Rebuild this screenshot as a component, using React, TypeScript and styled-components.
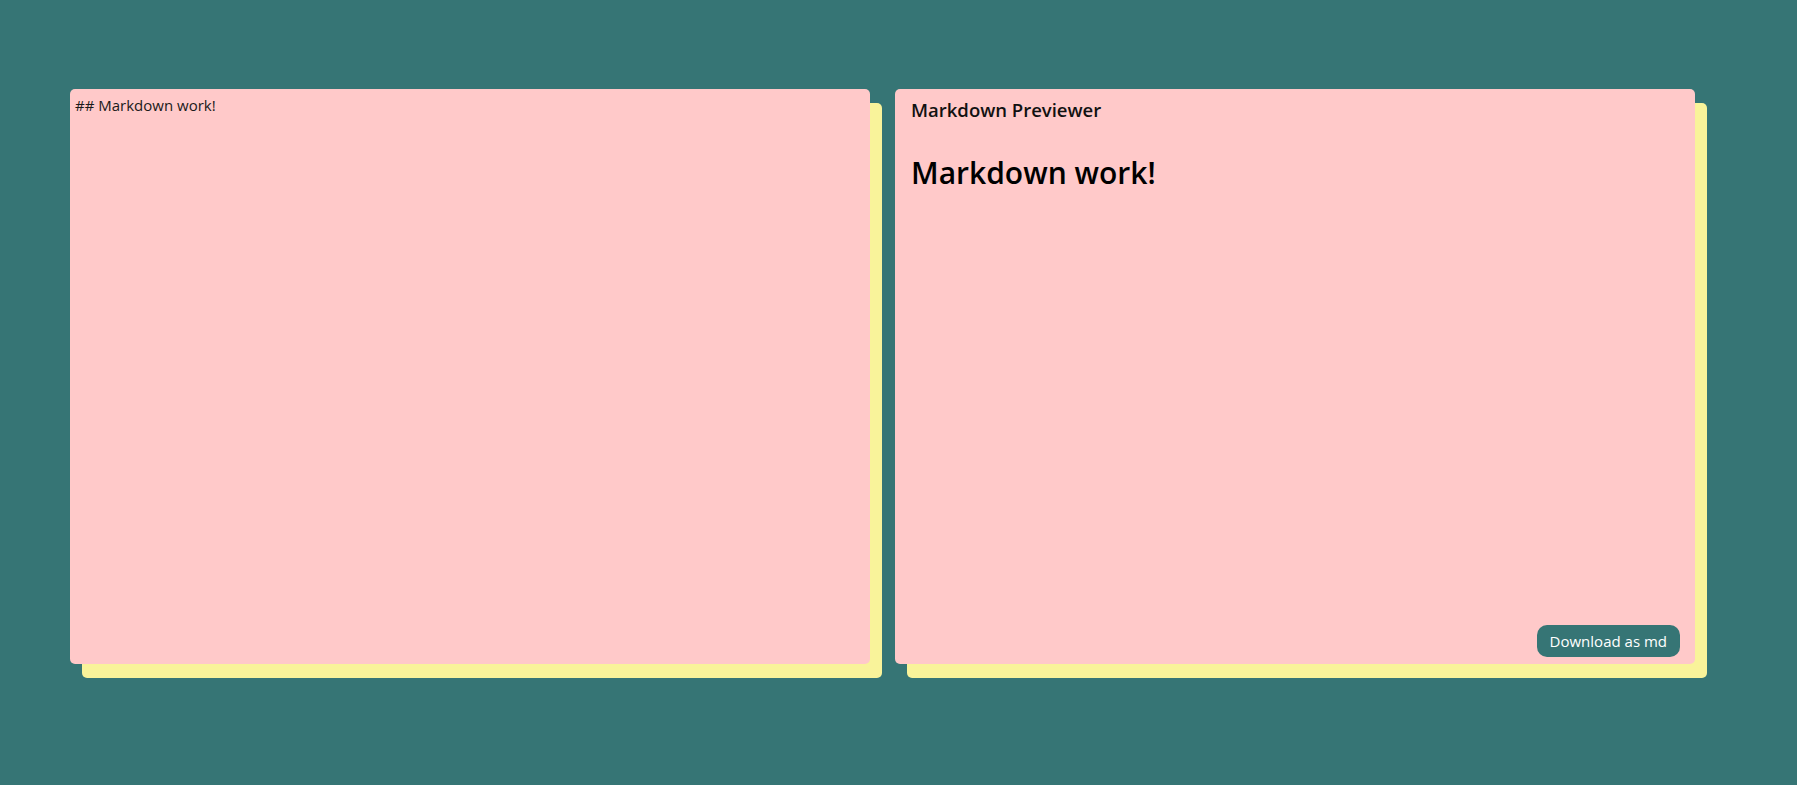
import React, { useState } from "react";
import styled, { createGlobalStyle } from "styled-components";

const GlobalStyle = createGlobalStyle`
  * {
    box-sizing: border-box;
  }
  html, body {
    margin: 0;
    padding: 0;
    background-color: #367575;
    font-family: "Open Sans", "Noto Sans", sans-serif;
  }
`;

const Page = styled.main`
  display: flex;
  gap: 25px;
  padding: 89px 0 0 70px;
  min-height: 785px;
`;

const Panel = styled.div`
  width: 800px;
  height: 575px;
  background-color: #ffc9c9;
  border-radius: 5px;
  box-shadow: 12px 14px 0 0 #f9f39a;
`;

const Editor = styled.textarea`
  display: block;
  width: 100%;
  height: 100%;
  padding: 6px 5px;
  border: none;
  border-radius: 5px;
  background: transparent;
  resize: none;
  outline: none;
  color: #1a1a1a;
  font-family: "Open Sans", "Noto Sans", sans-serif;
  font-size: 15px;
  line-height: 1.4;
`;

const Preview = styled(Panel)`
  display: flex;
  flex-direction: column;
  padding: 8px 15px 7px 16px;
`;

const Title = styled.div`
  font-size: 18.5px;
  font-weight: 600;
  color: #111;
`;

const Rendered = styled.div`
  flex: 1;
  color: #000;

  h2 {
    margin: 30px 0 0;
    font-size: 30px;
    font-weight: 600;
  }
`;

const Footer = styled.div`
  display: flex;
  justify-content: flex-end;
`;

const DownloadButton = styled.button`
  height: 32px;
  padding: 0 13px;
  border: none;
  border-radius: 10px;
  background-color: #367575;
  color: #fff;
  font-family: "Open Sans", "Noto Sans", sans-serif;
  font-size: 15px;
  cursor: pointer;
`;

function toHeading(src: string) {
  const m = src.match(/^##\s+(.*)$/m);
  return m ? m[1] : src;
}

export default function App() {
  const [text, setText] = useState("## Markdown work!");

  const download = () => {
    const blob = new Blob([text], { type: "text/markdown" });
    const url = URL.createObjectURL(blob);
    const a = document.createElement("a");
    a.href = url;
    a.download = "document.md";
    a.click();
    URL.revokeObjectURL(url);
  };

  return (
    <>
      <GlobalStyle />
      <Page>
        <Panel>
          <Editor value={text} onChange={(e) => setText(e.target.value)} />
        </Panel>
        <Preview>
          <Title>Markdown Previewer</Title>
          <Rendered>
            <h2>{toHeading(text)}</h2>
          </Rendered>
          <Footer>
            <DownloadButton onClick={download}>Download as md</DownloadButton>
          </Footer>
        </Preview>
      </Page>
    </>
  );
}
